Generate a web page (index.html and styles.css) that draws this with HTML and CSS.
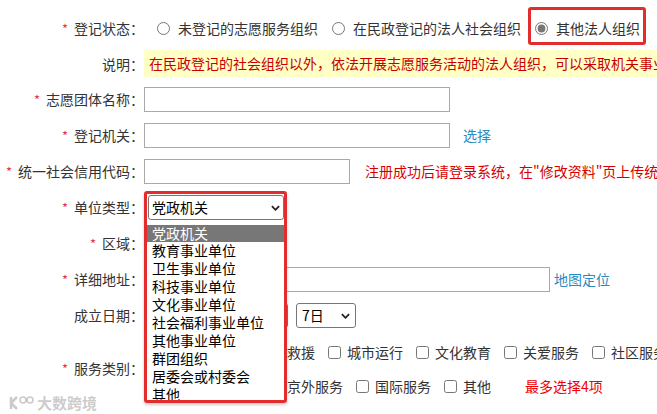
FILE: index.html
```html
<!DOCTYPE html>
<html lang="zh-CN">
<head>
    <meta charset="UTF-8">
    <meta name="viewport" content="width=device-width, initial-scale=1.0">
    <title>志愿团体注册</title>
    <link rel="stylesheet" href="styles.css">
</head>
<body>
    <form class="reg-form">
        <div class="form-row">
            <label class="form-label"><span class="req">*</span>登记状态：</label>
            <div class="form-field radio-group">
                <label class="radio"><input type="radio" name="status"><span>未登记的志愿服务组织</span></label>
                <label class="radio"><input type="radio" name="status"><span>在民政登记的法人社会组织</span></label>
                <label class="radio marked"><input type="radio" name="status" checked><span>其他法人组织</span></label>
            </div>
        </div>

        <div class="form-row note-row">
            <label class="form-label">说明：</label>
            <div class="form-field">
                <div class="notice">在民政登记的社会组织以外，依法开展志愿服务活动的法人组织，可以采取机关事业单位、群团组织等方式登记。</div>
            </div>
        </div>

        <div class="form-row">
            <label class="form-label" for="orgName"><span class="req">*</span>志愿团体名称：</label>
            <div class="form-field">
                <input type="text" id="orgName" class="text-input">
            </div>
        </div>

        <div class="form-row">
            <label class="form-label" for="regOrgan"><span class="req">*</span>登记机关：</label>
            <div class="form-field">
                <input type="text" id="regOrgan" class="text-input">
                <a href="#" class="link">选择</a>
            </div>
        </div>

        <div class="form-row">
            <label class="form-label" for="creditCode"><span class="req">*</span>统一社会信用代码：</label>
            <div class="form-field">
                <input type="text" id="creditCode" class="text-input w-mid">
                <span class="hint">注册成功后请登录系统，在"修改资料"页上传统一社会信用代码证书扫描件</span>
            </div>
        </div>

        <div class="form-row">
            <label class="form-label"><span class="req">*</span>单位类型：</label>
            <div class="form-field">
                <div class="picker">
                    <span class="select-wrap unit-select">
                        <select><option>党政机关</option></select>
                        <svg class="chevron" viewBox="0 0 10 6" width="9" height="6"><path d="M1 1l4 4 4-4" fill="none" stroke="#222" stroke-width="2"/></svg>
                    </span>
                    <ul class="option-list">
                        <li class="active">党政机关</li>
                        <li>教育事业单位</li>
                        <li>卫生事业单位</li>
                        <li>科技事业单位</li>
                        <li>文化事业单位</li>
                        <li>社会福利事业单位</li>
                        <li>其他事业单位</li>
                        <li>群团组织</li>
                        <li>居委会或村委会</li>
                        <li>其他</li>
                    </ul>
                    <span class="annot"></span>
                </div>
            </div>
        </div>

        <div class="form-row">
            <label class="form-label"><span class="req">*</span>区域：</label>
            <div class="form-field selects">
                <span class="select-wrap w-70">
                    <select><option>北京市</option></select>
                    <svg class="chevron" viewBox="0 0 10 6" width="9" height="6"><path d="M1 1l4 4 4-4" fill="none" stroke="#222" stroke-width="2"/></svg>
                </span>
                <span class="select-wrap w-58">
                    <select><option>东城区</option></select>
                    <svg class="chevron" viewBox="0 0 10 6" width="9" height="6"><path d="M1 1l4 4 4-4" fill="none" stroke="#222" stroke-width="2"/></svg>
                </span>
            </div>
        </div>

        <div class="form-row">
            <label class="form-label" for="address"><span class="req">*</span>详细地址：</label>
            <div class="form-field">
                <input type="text" id="address" class="text-input w-long">
                <a href="#" class="link map-link">地图定位</a>
            </div>
        </div>

        <div class="form-row">
            <label class="form-label">成立日期：</label>
            <div class="form-field selects">
                <span class="select-wrap w-70">
                    <select><option>2023年</option></select>
                    <svg class="chevron" viewBox="0 0 10 6" width="9" height="6"><path d="M1 1l4 4 4-4" fill="none" stroke="#222" stroke-width="2"/></svg>
                </span>
                <span class="select-wrap w-62">
                    <select><option>1月</option></select>
                    <svg class="chevron" viewBox="0 0 10 6" width="9" height="6"><path d="M1 1l4 4 4-4" fill="none" stroke="#222" stroke-width="2"/></svg>
                </span>
                <span class="select-wrap w-60">
                    <select><option>7日</option></select>
                    <svg class="chevron" viewBox="0 0 10 6" width="9" height="6"><path d="M1 1l4 4 4-4" fill="none" stroke="#222" stroke-width="2"/></svg>
                </span>
            </div>
        </div>

        <div class="form-row multi-row">
            <label class="form-label"><span class="req">*</span>服务类别：</label>
            <div class="form-field checks">
                <div class="check-line">
                    <label class="check"><input type="checkbox"><span>环境保护</span></label>
                    <label class="check"><input type="checkbox"><span>应急救援</span></label>
                    <label class="check"><input type="checkbox"><span>城市运行</span></label>
                    <label class="check"><input type="checkbox"><span>文化教育</span></label>
                    <label class="check"><input type="checkbox"><span>关爱服务</span></label>
                    <label class="check"><input type="checkbox"><span>社区服务</span></label>
                </div>
                <div class="check-line">
                    <label class="check"><input type="checkbox"><span>大型赛会服务</span></label>
                    <label class="check"><input type="checkbox"><span>京外服务</span></label>
                    <label class="check"><input type="checkbox"><span>国际服务</span></label>
                    <label class="check"><input type="checkbox"><span>其他</span></label>
                    <span class="limit">最多选择4项</span>
                </div>
            </div>
        </div>
    </form>

    <div class="watermark">
        <svg viewBox="0 0 26 18" width="26" height="18"><path d="M3 3v12M3 9l6-6M3 9l6 6" fill="none" stroke="currentColor" stroke-width="2.5"/><circle cx="15" cy="6" r="3" fill="none" stroke="currentColor" stroke-width="1.6"/><circle cx="22" cy="6" r="3" fill="none" stroke="currentColor" stroke-width="1.6"/></svg>
        <span>大数跨境</span>
    </div>
</body>
</html>
```

FILE: styles.css
```css
* {
    box-sizing: border-box;
}

html, body {
    margin: 0;
    padding: 0;
}

body {
    width: 657px;
    height: 414px;
    overflow: hidden;
    position: relative;
    background-color: #fff;
    font-family: "Noto Sans CJK SC", sans-serif;
    font-size: 14px;
    color: #333;
}

.reg-form {
    padding-top: 10px;
}

.form-row {
    display: flex;
    align-items: center;
    height: 36px;
    white-space: nowrap;
}

.form-row.note-row {
    height: 35px;
}

.form-row.multi-row {
    height: 70px;
}

.form-label {
    flex: none;
    width: 144px;
    text-align: right;
    line-height: 20px;
}

.req {
    color: #e8373b;
    font-size: 13px;
    margin-right: 6px;
}

.form-field {
    display: flex;
    align-items: center;
    flex: 1;
    min-width: 0;
}

.form-field > * {
    flex: none;
}

/* radios */
.radio-group {
    padding-left: 13px;
}

.radio {
    display: inline-flex;
    align-items: center;
    gap: 8px;
    margin-right: 14px;
    line-height: 20px;
    position: relative;
}

.radio input {
    margin: 0;
    width: 13px;
    height: 13px;
    accent-color: #777;
}

.marked::after {
    content: "";
    position: absolute;
    left: -7px;
    right: -6px;
    top: -11px;
    bottom: -7px;
    border: 3px solid #e32c2c;
    border-radius: 3px;
}

.form-field > .notice {
    flex: 1;
    min-width: 0;
    height: 27px;
    line-height: 27px;
    padding-left: 5px;
    overflow: hidden;
    background-color: #ffffc6;
    color: #c80000;
}

/* text inputs */
.text-input {
    width: 306px;
    height: 25px;
    padding: 0 4px;
    border: 1px solid #a9a9a9;
    font: inherit;
}

.text-input.w-mid {
    width: 206px;
}

.text-input.w-long {
    width: 406px;
}

.link {
    color: #2a8bc0;
    text-decoration: none;
    margin-left: 13px;
}

.link.map-link {
    margin-left: 4px;
}

.hint {
    color: #d40000;
    margin-left: 15px;
}

/* selects */
.select-wrap {
    position: relative;
    display: inline-block;
    height: 25px;
    margin-right: 8px;
}

.select-wrap select {
    appearance: none;
    width: 100%;
    height: 25px;
    margin: 0;
    padding: 0 0 0 5px;
    border: 1px solid #767676;
    border-radius: 3px;
    background-color: #fff;
    font: inherit;
    color: #000;
}

.chevron {
    position: absolute;
    right: 6px;
    top: 10px;
    pointer-events: none;
}

.selects {
    padding-left: 4px;
}

.w-70 { width: 70px; }
.w-62 { width: 62px; }
.w-60 { width: 60px; }
.w-58 { width: 58px; }

/* open dropdown */
.picker {
    position: relative;
    width: 143px;
    height: 25px;
}

.unit-select {
    width: 136px;
    margin-left: 4px;
}

.unit-select select {
    padding-left: 3px;
}

.unit-select .chevron {
    right: 4px;
}

.option-list {
    position: absolute;
    left: 3px;
    top: 25px;
    z-index: 5;
    width: 137px;
    height: 180px;
    margin: 0;
    padding: 5px 0 0;
    list-style: none;
    overflow: hidden;
    background-color: #fff;
    color: #000;
}

.option-list li {
    height: 17.9px;
    line-height: 17.9px;
    padding-left: 5px;
}

.option-list li.active {
    background-color: #777;
    color: #fff;
}

.annot {
    position: absolute;
    left: 0;
    top: -4px;
    z-index: 6;
    width: 143px;
    height: 212px;
    border: 3px solid #e32c2c;
    border-radius: 3px;
    box-shadow: 0 2px 3px rgba(0, 0, 0, 0.2);
    pointer-events: none;
}

/* checkboxes */
.form-field.checks {
    flex-direction: column;
    align-items: flex-start;
    align-self: stretch;
    padding: 2px 0 0 8px;
}

.check-line {
    display: flex;
    align-items: center;
    height: 34px;
}

.check {
    display: inline-flex;
    align-items: center;
    gap: 6px;
    margin-right: 13px;
}

.check input {
    margin: 0;
    width: 13px;
    height: 13px;
}

.limit {
    color: #e00;
    margin-left: 21px;
}

.watermark {
    position: absolute;
    left: 8px;
    top: 392px;
    display: flex;
    align-items: center;
    gap: 3px;
    color: rgba(140, 140, 140, 0.45);
    font-size: 15px;
    font-weight: bold;
}
```
